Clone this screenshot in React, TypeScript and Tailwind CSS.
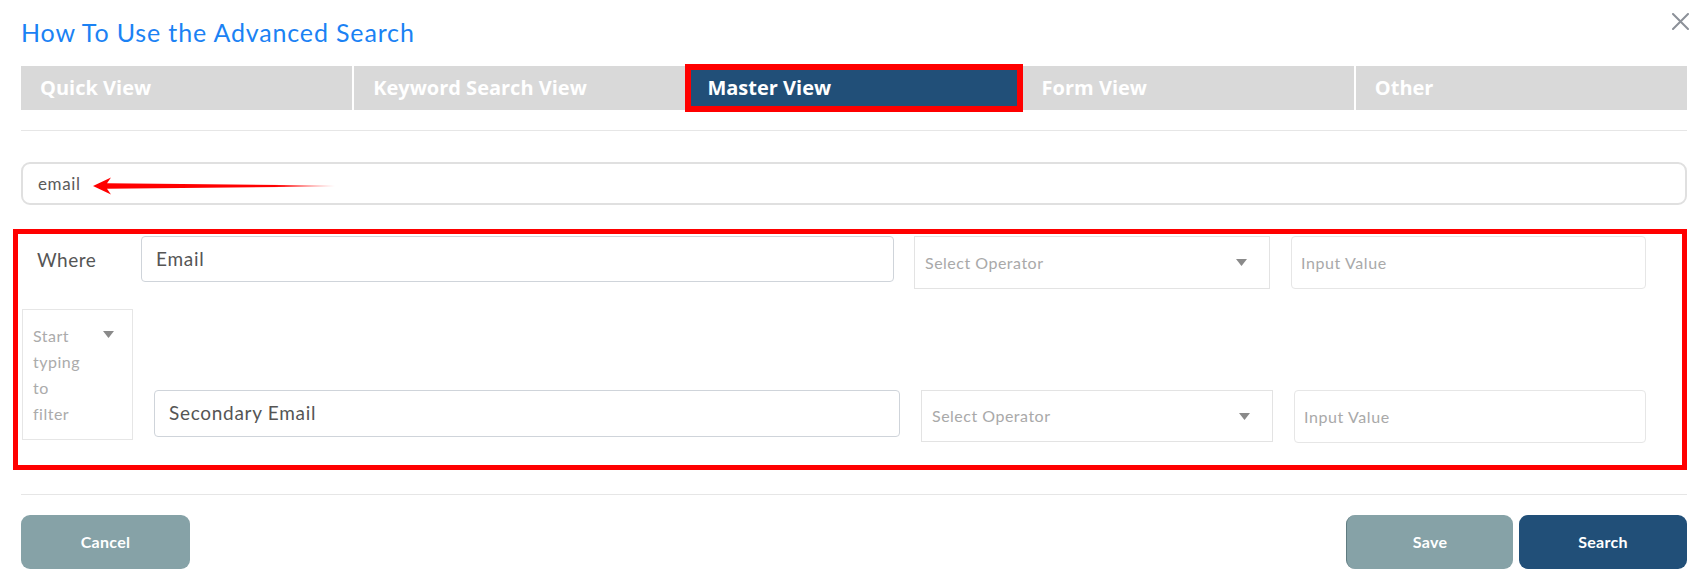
const tabs = ["Quick View", "Keyword Search View", "Master View", "Form View", "Other"];

const round = "font-['Lato','Noto_Sans',sans-serif]";

function Caret() {
  return (
    <svg width="11" height="7" viewBox="0 0 11 7" className="shrink-0">
      <path d="M0 0h11L5.5 7z" fill="#8a8a8a" />
    </svg>
  );
}

function SelectBox({ className }: { className: string }) {
  return (
    <div
      className={`flex items-center justify-between border border-[#e3e3e3] bg-white pl-[10px] pr-[22px] text-[16px] tracking-[0.5px] text-[#a9a9a9] ${className}`}
    >
      <span>Select Operator</span>
      <Caret />
    </div>
  );
}

function ValueBox({ className }: { className: string }) {
  return (
    <div
      className={`flex items-center rounded-[4px] border border-[#e6e6e6] bg-white px-[9px] text-[16px] tracking-[0.6px] text-[#a9a9a9] ${className}`}
    >
      Input Value
    </div>
  );
}

export default function App() {
  return (
    <div className={`relative h-[588px] w-[1708px] overflow-hidden bg-white px-[21px] ${round}`}>
      <button className="absolute right-[19px] top-[13px]">
        <svg width="17" height="17" viewBox="0 0 17 17">
          <path d="M1 1L16 16M16 1L1 16" stroke="#8c9199" strokeWidth="2" strokeLinecap="round" />
        </svg>
      </button>

      <h1 className="pt-[14px] text-[25px] leading-[36px] tracking-[0.85px] text-[#1b82f4]">
        How To Use the Advanced Search
      </h1>

      <div className="mt-[16px] flex h-[44px] gap-[2px]">
        {tabs.map((t) =>
          t === "Master View" ? (
            <div
              key={t}
              className="flex flex-1 items-center bg-[#214f78] px-[20px] font-['Open_Sans',sans-serif] text-[20px] font-bold text-white outline-[6px] outline-offset-[-4px] outline-[#ff0000] outline-solid"
            >
              {t}
            </div>
          ) : (
            <div
              key={t}
              className="flex flex-1 items-center bg-[#d9d9d9] px-[19px] font-['Open_Sans',sans-serif] text-[20px] font-bold text-white"
            >
              {t}
            </div>
          ),
        )}
      </div>

      <div className="mt-[20px] border-t border-[#e6e6e6]" />

      <div className="relative mt-[31px] flex h-[43px] items-center rounded-[9px] border-2 border-[#e0e0e0] px-[15px] text-[17px] tracking-[0.6px] text-[#5b5b5b]">
        email
        <svg className="absolute left-[70px] top-[13px]" width="242" height="18" viewBox="0 0 242 18">
          <defs>
            <linearGradient id="tail" x1="0" x2="1" y1="0" y2="0">
              <stop offset="0" stopColor="#ff0000" />
              <stop offset="0.75" stopColor="#ff0000" />
              <stop offset="1" stopColor="#ff0000" stopOpacity="0" />
            </linearGradient>
          </defs>
          <path d="M0 9 L18 0.5 L14 6.2 L242 8.6 L242 9.4 L14 11.8 L18 17.5 Z" fill="url(#tail)" />
        </svg>
      </div>

      <div className="ml-[-8px] mt-[24px] border-[5px] border-[#ff0000] px-[4px] pb-[22px] pt-[2px]">
        <div className="flex items-start">
          <div className="w-[119px] pl-[15px] pt-[10px] text-[19px] tracking-[0.5px] text-[#555]">Where</div>
          <div className="flex h-[46px] w-[753px] items-center rounded-[4px] border border-[#cfd4da] px-[14px] text-[19px] tracking-[0.7px] text-[#555]">
            Email
          </div>
          <SelectBox className="ml-[20px] h-[53px] w-[356px]" />
          <ValueBox className="ml-[21px] h-[53px] w-[355px]" />
        </div>

        <div className="mt-[20px] flex items-start">
          <div className="flex h-[131px] w-[111px] justify-between border border-[#e6e6e6] pl-[10px] pr-[18px] pt-[13px] text-[16px] leading-[26px] tracking-[0.5px] text-[#ababab]">
            <span>
              Start
              <br />
              typing
              <br />
              to
              <br />
              filter
            </span>
            <span className="pt-[8px]">
              <Caret />
            </span>
          </div>
          <div className="ml-[21px] mt-[81px] flex h-[47px] w-[746px] items-center rounded-[4px] border border-[#cfd4da] px-[14px] text-[19px] tracking-[0.7px] text-[#555]">
            Secondary Email
          </div>
          <SelectBox className="ml-[21px] mt-[81px] h-[52px] w-[352px]" />
          <ValueBox className="ml-[21px] mt-[81px] h-[53px] w-[352px]" />
        </div>
      </div>

      <div className="mt-[24px] border-t border-[#e6e6e6]" />

      <div className="mt-[20px] flex items-center">
        <button className="h-[54px] w-[169px] rounded-[9px] bg-[#86a2a7] text-[16px] font-bold tracking-[0.3px] text-white">
          Cancel
        </button>
        <div className="flex-1" />
        <button className="h-[54px] w-[167px] rounded-[9px] border-l border-[#5f7b80] bg-[#86a2a7] text-[16px] font-bold tracking-[0.3px] text-white">
          Save
        </button>
        <button className="ml-[6px] h-[54px] w-[168px] rounded-[9px] bg-[#214f78] text-[16px] font-bold tracking-[0.3px] text-white">
          Search
        </button>
      </div>
    </div>
  );
}
